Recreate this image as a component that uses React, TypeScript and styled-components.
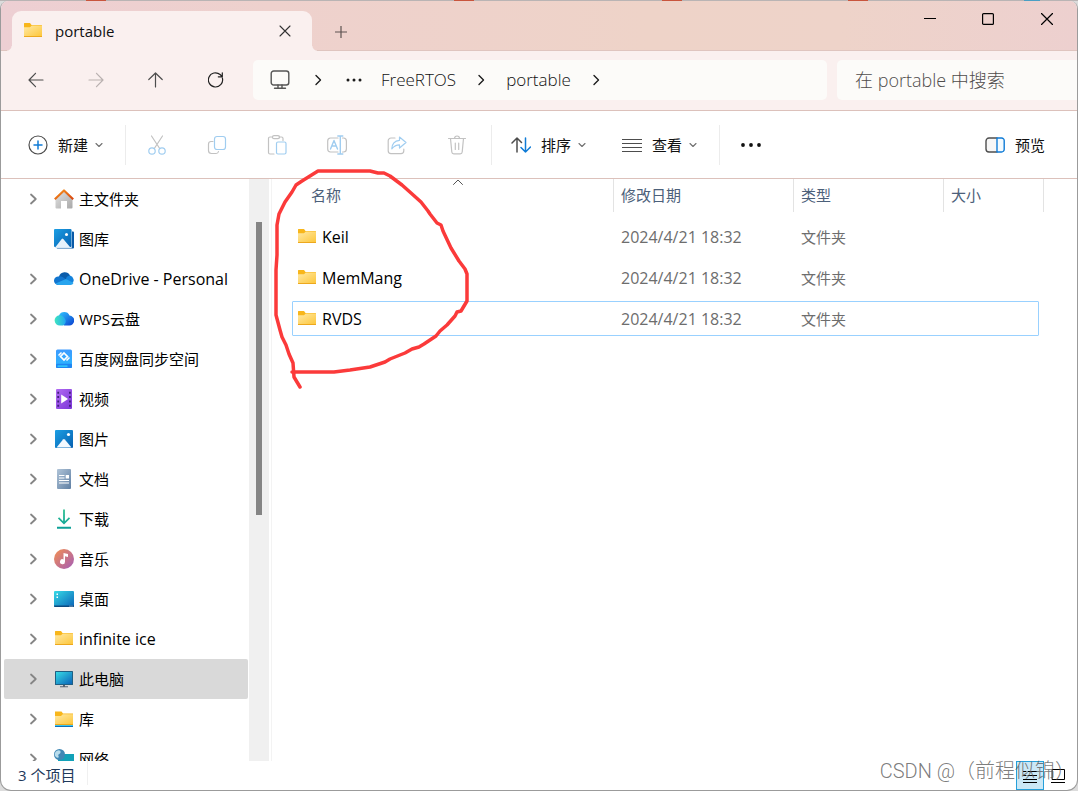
import React from "react";
import styled, { createGlobalStyle, css } from "styled-components";

const GlobalStyle = createGlobalStyle`
  *, *::before, *::after { box-sizing: border-box; }
  body {
    margin: 0;
    font-family: "Open Sans", "Noto Sans CJK SC", sans-serif;
    font-size: 15px;
    line-height: 20px;
    color: #111;
    background: #dcdcdc;
  }
  button, input, table { font: inherit; color: inherit; }
  button { border: 0; padding: 0; margin: 0; background: none; cursor: default; }
  ul { list-style: none; margin: 0; padding: 0; }
  svg { display: block; flex: none; }
`;

const LINE = "#dcc1bb";

/* ---------- window frame ---------- */

const Desktop = styled.div`
  height: 100vh;
  padding-top: 1px;
  background:
    linear-gradient(
      90deg,
      #b9b4b4 8%, #c8553d 8% 9.8%, #b9b4b4 9.8% 42.1%, #c8553d 42.1% 44%,
      #b9b4b4 44% 61.4%, #c8553d 61.4% 63.3%, #b9b4b4 63.3% 78.7%,
      #c8553d 78.7% 80.5%, #b9b4b4 80.5% 95%, #4a9fc4 95% 96.5%, #b9b4b4 96.5%
    ) top / 100% 1px no-repeat,
    #dcdcdc;
`;

const Window = styled.div`
  position: relative;
  display: flex;
  flex-direction: column;
  height: 100%;
  overflow: hidden;
  border: 1px solid #9b9b9b;
  border-top-width: 0;
  border-radius: 8px 8px 11px 11px;
  background: #fff;
`;

const TitleBar = styled.header`
  display: flex;
  flex: none;
  height: 50px;
  padding-left: 11px;
  background: linear-gradient(90deg, #edcfd3 0%, #eed1cd 25%, #eed3c8 60%, #eed3c9 78%, #edd0cf 100%);
  box-shadow: inset 0 -1px #dfc5bf;
`;

const Tab = styled.div`
  position: relative;
  display: flex;
  align-items: center;
  align-self: flex-end;
  width: 300px;
  height: 40px;
  padding: 0 17px 0 11px;
  border-radius: 9px 9px 0 0;
  background: #faf0ef;

  &::before, &::after {
    content: "";
    position: absolute;
    bottom: 0;
    width: 5px;
    height: 5px;
  }
  &::before {
    right: 100%;
    background: radial-gradient(circle at 0 0, transparent 4px, #faf0ef 5px);
  }
  &::after {
    left: 100%;
    background: radial-gradient(circle at 100% 0, transparent 4px, #faf0ef 5px);
  }
`;

const TabTitle = styled.span`
  flex: 1;
  margin-left: 12px;
  font-weight: 500;
`;

const PlainButton = styled.button<{ $width: number; $height: number }>`
  display: flex;
  align-items: center;
  justify-content: center;
  width: ${(p) => p.$width}px;
  height: ${(p) => p.$height}px;
`;

const NewTabSlot = styled.div`
  display: flex;
  align-items: flex-end;
  flex: 1;
  padding-left: 10px;
`;

/* ---------- navigation row ---------- */

const NavRow = styled.div`
  display: flex;
  flex: none;
  height: 60px;
  padding: 9px 0 0 5px;
  background: #faf0ef;
  border-bottom: 1px solid ${LINE};
`;

const Breadcrumb = styled.nav`
  display: flex;
  align-items: center;
  flex: 1;
  height: 40px;
  margin-left: 7px;
  padding-left: 17px;
  border-radius: 5px;
  background: #fcfbf9;
  color: #111;
`;

const Crumb = styled.a`
  margin: 0 19px;
  font-size: 17px;
  font-weight: 300;
  line-height: 24px;
  color: inherit;
  text-decoration: none;
`;

const Dots = styled.button`
  margin-left: 22px;
`;

const CrumbChevron = styled.span<{ $lead?: boolean }>`
  margin-left: ${(p) => (p.$lead ? 22 : 0)}px;
`;

const Search = styled.input`
  width: 240px;
  height: 40px;
  margin-left: 10px;
  padding: 0 18px;
  border: 0;
  border-radius: 5px 0 0 5px;
  outline: 0;
  background: #fcfbf9;
  font-size: 18px;
  font-weight: 300;

  &::placeholder { color: #4f4c4b; opacity: 1; }
`;

/* ---------- command bar ---------- */

const CommandBar = styled.div`
  display: flex;
  flex: none;
  align-items: center;
  height: 68px;
  padding: 0 14px 0 9px;
  border-bottom: 1px solid ${LINE};
`;

const Command = styled.button`
  display: flex;
  align-items: center;
  height: 40px;
  padding: 0 18px;

  & > span { margin-left: 10px; }
  & > span + svg { margin-left: 7px; }
`;

const Divider = styled.span`
  width: 1px;
  height: 40px;
  margin: 0 1px 0 4px;
  background: #ececec;
`;

const Spacer = styled.span`
  flex: 1;
`;

/* ---------- body ---------- */

const Body = styled.div`
  display: flex;
  flex: 1;
  min-height: 0;
`;

const Sidebar = styled.nav`
  width: 247px;
  padding-left: 3px;
  overflow: hidden;
`;

const TreeItem = styled.li<{ $selected?: boolean }>`
  display: flex;
  align-items: center;
  height: 40px;
  border-radius: 2px;
  color: #000;
  ${(p) => p.$selected && css`background: #d9d9d9;`}
`;

const Expander = styled.button`
  display: flex;
  justify-content: center;
  width: 20px;
  margin: 0 10px 0 20px;
`;

const TreeLink = styled.a<{ $latin?: boolean }>`
  display: flex;
  align-items: center;
  gap: 5px;
  font-size: ${(p) => (p.$latin ? 16 : 15)}px;
  color: inherit;
  text-decoration: none;
  white-space: nowrap;
`;

const ScrollTrack = styled.div`
  width: 20px;
  margin-left: 1px;
  padding: 43px 7px 0;
  background: #f0f0f0;
`;

const ScrollThumb = styled.div`
  height: 293px;
  background: #858585;
`;

const FilePane = styled.main`
  flex: 1;
  margin-left: 2px;
  padding-left: 20px;
  border-left: 1px solid #f3f3f3;
`;

const FileTable = styled.table`
  width: 752px;
  table-layout: fixed;
  border-collapse: collapse;
`;

const HeadCell = styled.th<{ $width: number; $indent?: boolean }>`
  position: relative;
  width: ${(p) => p.$width}px;
  height: 38px;
  padding: 0 0 0 ${(p) => (p.$indent ? 12 : 0)}px;
  vertical-align: top;
  font-weight: 400;
`;

const HeadButton = styled.button`
  display: block;
  width: 100%;
  height: 33px;
  padding: 0 7px 2px;
  border-right: 1px solid #e3e3e3;
  text-align: left;
  color: #4c607a;
`;

const SortMark = styled.span`
  position: absolute;
  top: 0;
  left: 161px;
`;

const FileRow = styled.tr<{ $focused?: boolean }>`
  position: relative;
  height: 41px;

  ${(p) =>
    p.$focused &&
    css`
      &::after {
        content: "";
        position: absolute;
        inset: 2px 5px 4px 0;
        border: 1px solid #99d1ff;
        border-radius: 1px;
      }
    `}
`;

const Cell = styled.td<{ $latin?: boolean }>`
  padding: 0 7px 2px;
  font-size: ${(p) => (p.$latin ? 16 : 15)}px;
  color: #6d6d6d;
`;

const NameCell = styled.td`
  padding: 0 5px 2px;
  font-size: 16px;
  color: #000;
`;

const FileName = styled.div`
  display: flex;
  align-items: center;
  gap: 5px;
`;

/* ---------- status bar ---------- */

const StatusBar = styled.footer`
  display: flex;
  flex: none;
  height: 29px;
  padding: 0 5px 0 17px;
`;

const StatusText = styled.span`
  height: 24px;
  padding: 4px 12px 0 0;
  border-right: 1px solid #f0f0f0;
  color: #1e395b;
`;

const ViewButton = styled.button<{ $active?: boolean }>`
  display: flex;
  align-items: center;
  justify-content: center;
  width: 28px;
  height: 29px;
  border: 1px solid ${(p) => (p.$active ? "#26a0da" : "transparent")};
  background: ${(p) => (p.$active ? "#cbe8f6" : "transparent")};
`;

const Watermark = styled.span`
  position: absolute;
  right: 2px;
  bottom: 6px;
  font-family: Roboto, "Noto Sans CJK SC", sans-serif;
  font-size: 20px;
  line-height: 26px;
  font-weight: 300;
  color: rgba(90, 90, 90, 0.8);
  white-space: nowrap;
  pointer-events: none;
`;

const Scribble = styled.svg`
  position: absolute;
  top: 159px;
  left: 269px;
  pointer-events: none;
`;

/* ---------- line icons ---------- */

type StrokeProps = {
  size?: number;
  color?: string;
  width?: number;
  children: React.ReactNode;
};

const Line = ({ size = 20, color = "#4d4d4d", width = 1.2, children }: StrokeProps) => (
  <svg
    width={size}
    height={size}
    viewBox={`0 0 ${size} ${size}`}
    fill="none"
    stroke={color}
    strokeWidth={width}
    strokeLinecap="round"
    strokeLinejoin="round"
    aria-hidden="true"
  >
    {children}
  </svg>
);

const ChevronDown = () => (
  <Line size={8} color="#6f6f6f" width={1.1}><path d="M1 2.500 4 5.500 7 2.500" /></Line>
);
const CrumbArrow = () => (
  <Line size={12} color="#1c1c1c" width={1.4}><path d="M4 1.500 8.500 6 4 10.500" /></Line>
);
const TreeArrow = () => (
  <Line size={12} color="#858585" width={1.8}><path d="M3 1.500 7.800 6 3 10.500" /></Line>
);

const PALE = "#c2c2c2";
const PALE_BLUE = "#a0cdf0";

const CutIcon = () => (
  <Line color={PALE}>
    <path d="M4.500 1 12.700 13.500M15.500 1 7.300 13.500" />
    <g stroke={PALE_BLUE}><circle cx="5" cy="16" r="3.200" /><circle cx="15" cy="16" r="3.200" /></g>
  </Line>
);
const CopyIcon = () => (
  <Line color={PALE}>
    <path d="M6 6.500H4a2.500 2.500 0 0 0-2.500 2.500v6.500A3 3 0 0 0 4.500 18.500h4.500a2.500 2.500 0 0 0 2.500-2" />
    <rect x="7.500" y="1.500" width="11" height="13" rx="2.500" stroke={PALE_BLUE} />
  </Line>
);
const PasteIcon = () => (
  <Line color={PALE}>
    <path d="M7 19H3a1.500 1.500 0 0 1-1.500-1.500v-14A1.500 1.500 0 0 1 3 2h2.500M12 2h2.500A1.500 1.500 0 0 1 16 3.500v2" />
    <rect x="5.500" y=".700" width="7" height="3" rx="1.500" />
    <rect x="9.500" y="7" width="9.500" height="12" rx="1.500" stroke={PALE_BLUE} />
  </Line>
);
const RenameIcon = () => (
  <Line color={PALE}>
    <path d="M11 3H3.500A3 3 0 0 0 .700 6v8a3 3 0 0 0 2.800 3H11M15.500 3h1A3 3 0 0 1 19.400 6v8a3 3 0 0 1-2.900 3h-1" />
    <g stroke={PALE_BLUE} strokeWidth="1.400"><path d="M3.500 14 7 5.500 10.500 14M4.800 11h4.400M13.300 1v18M10.800 1h5M10.800 19h5" /></g>
  </Line>
);
const ShareIcon = () => (
  <Line color={PALE}>
    <path d="M8 3H4A2.800 2.800 0 0 0 1.200 5.800v10A2.800 2.800 0 0 0 4 18.600h10a2.800 2.800 0 0 0 2.800-2.800V14" />
    <path d="M12.500 2 19 7.500 12.500 13v-3.200C9 9.800 7 11 4.800 13.800 5 9 7.500 5.800 12.500 5.300Z" stroke={PALE_BLUE} />
  </Line>
);
const DeleteIcon = () => (
  <Line color={PALE}>
    <path d="M1.500 3.500h17M7.500 3.500a2.500 2.500 0 0 1 5 0M3.500 3.500 4.800 17a2 2 0 0 0 2 1.800h6.400a2 2 0 0 0 2-1.800L16.500 3.500M8.300 8v6.500M11.700 8v6.500" />
  </Line>
);

/* ---------- coloured icons ---------- */

const Pic = ({ children }: { children: React.ReactNode }) => (
  <svg width="20" height="20" viewBox="0 0 20 20" aria-hidden="true">{children}</svg>
);

const GradientDefs = styled.svg`
  position: absolute;
`;

const Gradients = () => (
  <GradientDefs width="0" height="0" aria-hidden="true">
    <defs>
      <linearGradient id="folder" x1="0" y1="0" x2="1" y2="1"><stop offset="0" stopColor="#ffe9a6" /><stop offset="1" stopColor="#fdc73c" /></linearGradient>
      <linearGradient id="sky" x1="0" y1="0" x2="1" y2="1"><stop offset="0" stopColor="#1c9fe4" /><stop offset="1" stopColor="#0660b0" /></linearGradient>
      <linearGradient id="screen" x1="0" y1="0" x2="1" y2="1"><stop offset="0" stopColor="#36dbe6" /><stop offset="1" stopColor="#0b63b8" /></linearGradient>
      <linearGradient id="wall" x1="0" y1="0" x2="1" y2="1"><stop offset="0" stopColor="#e3e3e3" /><stop offset="1" stopColor="#a8a8a8" /></linearGradient>
      <linearGradient id="roof" x1="0" y1="0" x2="1" y2="1"><stop offset="0" stopColor="#f7941d" /><stop offset="1" stopColor="#d8440f" /></linearGradient>
      <linearGradient id="wps" x1="0" y1="0" x2="1" y2="0"><stop offset="0" stopColor="#3fe6c0" /><stop offset="1" stopColor="#22a6f2" /></linearGradient>
      <linearGradient id="wpsBack" x1="0" y1="0" x2="1" y2="1"><stop offset="0" stopColor="#2fc4ff" /><stop offset="1" stopColor="#0a3fd0" /></linearGradient>
      <linearGradient id="baidu" x1="0" y1="0" x2="0" y2="1"><stop offset="0" stopColor="#3d9bff" /><stop offset="1" stopColor="#2ab8ff" /></linearGradient>
      <linearGradient id="film" x1="0" y1="0" x2="1" y2="1"><stop offset="0" stopColor="#b26bf2" /><stop offset="1" stopColor="#7b35d8" /></linearGradient>
      <linearGradient id="paper" x1="0" y1="0" x2="1" y2="1"><stop offset="0" stopColor="#b0c4d8" /><stop offset="1" stopColor="#5f7fa3" /></linearGradient>
      <linearGradient id="down" x1="0" y1="0" x2="0" y2="1"><stop offset="0" stopColor="#2fc193" /><stop offset="1" stopColor="#0c9f98" /></linearGradient>
      <linearGradient id="disc" x1="0" y1="0" x2="1" y2="1"><stop offset="0" stopColor="#f49050" /><stop offset="1" stopColor="#a35cb8" /></linearGradient>
    </defs>
  </GradientDefs>
);

const FolderIcon = () => (
  <Pic>
    <path d="M1 2.500A.500.500 0 0 1 1.500 2H7l1.500 2H18.500a.500.500 0 0 1 .500.500V7H1Z" fill="#f8b61b" />
    <path d="M1 6.200h6L8.800 4.500H19V15H1Z" fill="url(#folder)" />
    <path d="M1 15h18v1H1Z" fill="#eda81d" />
  </Pic>
);
const HomeIcon = () => (
  <Pic>
    <path d="M1.500 9.500 10 2l8.500 7.500V18.500a1 1 0 0 1-1 1H13V12H7v7.500H2.500a1 1 0 0 1-1-1Z" fill="url(#wall)" />
    <path d="m.800 10.200 9.200-8.700 9.200 8.700" fill="none" stroke="url(#roof)" strokeWidth="2.200" strokeLinejoin="round" />
  </Pic>
);
const GalleryIcon = () => (
  <Pic>
    <path d="M2.500 18h15V2.500H19a1 1 0 0 1 1 1v15a1 1 0 0 1-1 1H3.500a1 1 0 0 1-1-1Z" fill="#0a5aa8" />
    <path d="M17.500 1v17.500H1" fill="none" stroke="#d7e8f6" strokeWidth="1" />
    <rect width="17.500" height="18" rx="1" fill="url(#sky)" />
    <path d="m1.500 18 6.200-8a1 1 0 0 1 1.600 0l6.700 8Z" fill="#e6f2fc" />
    <circle cx="12.500" cy="5.500" r="1.500" fill="#fff" />
  </Pic>
);
const OneDriveIcon = () => (
  <Pic>
    <path d="M5 7.500a6 6 0 0 1 11-1l-3 5.500H5Z" fill="#0a5cab" />
    <path d="M4 16A4.200 4.200 0 0 1 4.500 7.500c2.500-.600 4 .500 7.500 3l-5 5.500Z" fill="#1175cf" />
    <path d="M12 9A5.500 5.500 0 0 1 16 6.500a4.600 4.600 0 0 1 2 8l-5-2Z" fill="#1382dc" />
    <path d="M1.500 14.500 12 10l7.500 4a3.200 3.200 0 0 1-3 2H4.500A4 4 0 0 1 1.500 14.500Z" fill="#28a4ee" />
  </Pic>
);
const WpsIcon = () => (
  <Pic>
    <path d="M5 6.500a5.700 5.700 0 0 1 10.500 0 5 5 0 0 1-.500 10H10Z" fill="url(#wpsBack)" />
    <path d="M5.500 6.200c3 .200 4.500 1.500 6 4.500.800 2.500-.500 5.800-3.500 5.800H6a5.100 5.100 0 0 1-.500-10.300Z" fill="url(#wps)" />
  </Pic>
);
const BaiduIcon = () => (
  <Pic>
    <rect x="2" y=".500" width="16" height="18.500" rx="1.500" fill="url(#baidu)" />
    <rect x="2" y="14.800" width="16" height="4.200" rx="1" fill="#1f86f2" />
    <rect x="3.500" y="16.500" width="10" height="1.200" fill="#37dcff" />
    <path d="M10 4 13.500 7.500 10 11 6.500 7.500Z" fill="none" stroke="#fff" strokeWidth="1.700" />
    <path d="m4.500 6.500 3-3M12.500 11.500l3-3" stroke="#fff" strokeWidth="1.500" />
  </Pic>
);
const VideoIcon = () => (
  <Pic>
    <rect x="2" width="16" height="20" rx="1" fill="url(#film)" />
    <path d="M4.200 2.800v15M15.900 2.800v15" stroke="#41207a" strokeWidth="1.800" strokeDasharray="2 2.300" />
    <path d="M7.200 5.500v9L14 10Z" fill="#fff" />
  </Pic>
);
const PicturesIcon = () => (
  <Pic>
    <rect x="1" y="1" width="18" height="18" rx="1" fill="url(#sky)" />
    <path d="m2.500 18.500 6.500-8a1.200 1.200 0 0 1 1.800 0l6.700 8Z" fill="#f3f9ff" />
    <circle cx="14.500" cy="5.500" r="1.600" fill="#fff" />
  </Pic>
);
const DocsIcon = () => (
  <Pic>
    <rect x="3" width="14" height="20" rx="1" fill="url(#paper)" />
    <path d="M5 6.500h5.500M5 9h5.500M5 11.500h10M5 14h10" stroke="#fff" strokeWidth="1.200" />
    <rect x="11.700" y="6" width="3.300" height="3.500" fill="#fff" />
  </Pic>
);
const DownloadIcon = () => (
  <Pic>
    <path d="M9.100.500h1.800v11.700l4-4 1.200 1.300-6.100 6-6.100-6 1.200-1.300 4 4ZM3 17.800h14v2H3Z" fill="url(#down)" />
  </Pic>
);
const MusicIcon = () => (
  <Pic>
    <circle cx="10" cy="10" r="10" fill="url(#disc)" />
    <path d="M9.500 4 14 5v3l-3-.700V12.700a2.500 2.500 0 1 1-1.500-2.300Z" fill="#fff" />
  </Pic>
);
const DesktopIcon = () => (
  <Pic>
    <rect y="2" width="20" height="16" rx="1" fill="url(#screen)" />
    <path d="M0 16.500h20v.500a1 1 0 0 1-1 1H1a1 1 0 0 1-1-1Z" fill="#0c4a80" />
    <path d="M2.500 4.500h1.500V6H2.500ZM2.500 7.500h1.500V9H2.500ZM15.500 16.700h1v.800h-1ZM17.500 16.700h1v.800h-1Z" fill="#fff" />
  </Pic>
);
const PcIcon = () => (
  <Pic>
    <rect x="1" y="2" width="18" height="14" rx=".500" fill="#1f5f83" />
    <rect x="2" y="3" width="16" height="12" fill="url(#screen)" />
    <path d="M9 16h2v1.500h-2ZM6 17.200h8v1H6Z" fill="#596473" />
  </Pic>
);
const LibraryIcon = () => (
  <Pic>
    <path d="M1 2.500h6.500l1.500 2H19V8H1Z" fill="#f8b61b" />
    <path d="M1 7h6l1.800-1.700H19V15H1Z" fill="url(#folder)" />
    <path d="M1 15h18v1H1Z" fill="#eda81d" />
    <path d="M1 16h18v1H1Z" fill="#3ac5ee" />
    <path d="M1 17h18v1H1Z" fill="#0f6fb8" />
  </Pic>
);
const NetworkIcon = () => (
  <Pic>
    <rect x="4" y="5" width="16" height="12" fill="#12a1b8" />
    <circle cx="5.500" cy="5.500" r="5.500" fill="#3f87b5" />
    <path d="M2.500 2C5 .500 7 1.500 6.500 3.500S3.500 5 4.500 7 3 9.500 1.500 7.500 1 3 2.500 2Z" fill="#b9dcec" />
  </Pic>
);

/* ---------- data ---------- */

type Place = {
  label: string;
  icon: () => React.ReactElement;
  leaf?: boolean;
  latin?: boolean;
  selected?: boolean;
};

const places: Place[] = [
  { label: "主文件夹", icon: HomeIcon },
  { label: "图库", icon: GalleryIcon, leaf: true },
  { label: "OneDrive - Personal", icon: OneDriveIcon, latin: true },
  { label: "WPS云盘", icon: WpsIcon },
  { label: "百度网盘同步空间", icon: BaiduIcon },
  { label: "视频", icon: VideoIcon },
  { label: "图片", icon: PicturesIcon },
  { label: "文档", icon: DocsIcon },
  { label: "下载", icon: DownloadIcon },
  { label: "音乐", icon: MusicIcon },
  { label: "桌面", icon: DesktopIcon },
  { label: "infinite ice", icon: FolderIcon, latin: true },
  { label: "此电脑", icon: PcIcon, selected: true },
  { label: "库", icon: LibraryIcon },
  { label: "网络", icon: NetworkIcon },
];

const files = [
  { name: "Keil", date: "2024/4/21 18:32", type: "文件夹" },
  { name: "MemMang", date: "2024/4/21 18:32", type: "文件夹" },
  { name: "RVDS", date: "2024/4/21 18:32", type: "文件夹", focused: true },
];

const editCommands = [
  { label: "剪切", icon: CutIcon },
  { label: "复制", icon: CopyIcon },
  { label: "粘贴", icon: PasteIcon },
  { label: "重命名", icon: RenameIcon },
  { label: "共享", icon: ShareIcon },
  { label: "删除", icon: DeleteIcon },
];

export default function App() {
  return (
    <Desktop>
      <GlobalStyle />
      <Gradients />
      <Window>
        <TitleBar>
          <Tab>
            <FolderIcon />
            <TabTitle>portable</TabTitle>
            <PlainButton $width={20} $height={20} aria-label="关闭标签页">
              <Line size={12} color="#333" width={1.1}><path d="m1 1 10 10M11 1 1 11" /></Line>
            </PlainButton>
          </Tab>
          <NewTabSlot>
            <PlainButton $width={38} $height={38} aria-label="新建标签页">
              <Line size={12} color="#5d5250"><path d="M6 0v12M0 6h12" /></Line>
            </PlainButton>
          </NewTabSlot>
          <PlainButton $width={58} $height={36} aria-label="最小化">
            <Line size={12} color="#000"><path d="M0 5.500h12" /></Line>
          </PlainButton>
          <PlainButton $width={58} $height={36} aria-label="最大化">
            <Line size={12} color="#000"><rect x=".600" y=".600" width="10.800" height="10.800" rx="1" /></Line>
          </PlainButton>
          <PlainButton $width={60} $height={36} aria-label="关闭">
            <Line size={12} color="#000"><path d="m.500.500 11 11M11.500.500l-11 11" /></Line>
          </PlainButton>
        </TitleBar>

        <NavRow>
          <PlainButton $width={60} $height={40} aria-label="后退">
            <Line size={16}><path d="M15 8H1M7.500 1.300 1 8l6.500 6.700" /></Line>
          </PlainButton>
          <PlainButton $width={60} $height={40} aria-label="前进" disabled>
            <Line size={16} color="#b9b1b0"><path d="M1 8h14M8.500 1.300 15 8l-6.500 6.700" /></Line>
          </PlainButton>
          <PlainButton $width={60} $height={40} aria-label="上移">
            <Line size={16}><path d="M7.500 15V1M.800 7.500 7.500 1l6.700 6.500" /></Line>
          </PlainButton>
          <PlainButton $width={60} $height={40} aria-label="刷新">
            <Line size={16} color="#222"><path d="M14.400 6.200A7.100 7.100 0 1 1 12.100 2.500L14.100 4.500M14.300.800v4h-4" /></Line>
          </PlainButton>
          <Breadcrumb aria-label="地址">
            <Line color="#555" width={1.400}>
              <rect x="1.200" y="1" width="17.600" height="14" rx="2.500" />
              <path d="M8 15v3M12 15v3M4.500 18.300h11" />
            </Line>
            <CrumbChevron $lead><CrumbArrow /></CrumbChevron>
            <Dots aria-label="更多路径">
              <svg width="16" height="4" viewBox="0 0 16 4" fill="#1c1c1c"><circle cx="2" cy="2" r="1.500" /><circle cx="8" cy="2" r="1.500" /><circle cx="14" cy="2" r="1.500" /></svg>
            </Dots>
            <Crumb href="#freertos">FreeRTOS</Crumb>
            <CrumbChevron><CrumbArrow /></CrumbChevron>
            <Crumb href="#portable">portable</Crumb>
            <CrumbChevron><CrumbArrow /></CrumbChevron>
          </Breadcrumb>
          <Search type="search" placeholder="在 portable 中搜索" aria-label="搜索" />
        </NavRow>

        <CommandBar>
          <Command>
            <Line><circle cx="10" cy="10" r="9" /><path d="M10 6v8M6 10h8" stroke="#0f7bd6" strokeWidth="1.500" /></Line>
            <span>新建</span>
            <ChevronDown />
          </Command>
          <Divider />
          {editCommands.map(({ label, icon: Icon }) => (
            <PlainButton key={label} $width={60} $height={40} aria-label={label} disabled><Icon /></PlainButton>
          ))}
          <Divider />
          <Command>
            <Line width={1.500}>
              <path d="M6 17V3M1 8l5-5 4.500 4.500" />
              <path d="M14.500 3v14M10 12.500l4.500 4.500 5-5" stroke="#0f7bd6" />
            </Line>
            <span>排序</span>
            <ChevronDown />
          </Command>
          <Command>
            <Line width={1}><path d="M0 4.500h20M0 8.500h20M0 12.500h20M0 16.500h20" /></Line>
            <span>查看</span>
            <ChevronDown />
          </Command>
          <Divider />
          <PlainButton $width={60} $height={40} aria-label="更多">
            <svg width="22" height="4" viewBox="0 0 22 4" fill="#111"><circle cx="3" cy="2" r="1.900" /><circle cx="11" cy="2" r="1.900" /><circle cx="19" cy="2" r="1.900" /></svg>
          </PlainButton>
          <Spacer />
          <Command>
            <Line width={1.400}>
              <path d="M12 3H4A3 3 0 0 0 1 6v8a3 3 0 0 0 3 3h8" fill="#f7f7f7" />
              <path d="M12 3h4.500A2.700 2.700 0 0 1 19.200 6v8a2.700 2.700 0 0 1-2.700 3H12Z" fill="#f4fbff" stroke="#0f7bd6" />
            </Line>
            <span>预览</span>
          </Command>
        </CommandBar>

        <Body>
          <Sidebar aria-label="导航窗格">
            <ul>
              {places.map(({ label, icon: Icon, leaf, latin, selected }) => (
                <TreeItem key={label} $selected={selected}>
                  <Expander aria-label={`展开 ${label}`} disabled={leaf}>{!leaf && <TreeArrow />}</Expander>
                  <TreeLink href="#place" $latin={latin}><Icon />{label}</TreeLink>
                </TreeItem>
              ))}
            </ul>
          </Sidebar>
          <ScrollTrack><ScrollThumb /></ScrollTrack>
          <FilePane>
            <FileTable>
              <thead>
                <tr>
                  <HeadCell $width={322} $indent>
                    <HeadButton>名称</HeadButton>
                    <SortMark><Line size={10} color="#555" width={1}><path d="M.500 5.500 5 1l4.500 4.500" /></Line></SortMark>
                  </HeadCell>
                  <HeadCell $width={180}><HeadButton>修改日期</HeadButton></HeadCell>
                  <HeadCell $width={150}><HeadButton>类型</HeadButton></HeadCell>
                  <HeadCell $width={100}><HeadButton>大小</HeadButton></HeadCell>
                </tr>
              </thead>
              <tbody>
                {files.map((file) => (
                  <FileRow key={file.name} $focused={file.focused}>
                    <NameCell><FileName><FolderIcon />{file.name}</FileName></NameCell>
                    <Cell $latin>{file.date}</Cell>
                    <Cell>{file.type}</Cell>
                    <Cell />
                  </FileRow>
                ))}
              </tbody>
            </FileTable>
          </FilePane>
        </Body>

        <StatusBar>
          <StatusText>3 个项目</StatusText>
          <Spacer />
          <ViewButton $active aria-label="详细信息">
            <Line size={14} color="#000" width={1}><path d="M0 2.500h3M5 2.500h9M0 6.500h3M5 6.500h9M0 10.500h14M0 13.500h14" /></Line>
          </ViewButton>
          <ViewButton aria-label="大缩略图">
            <Line size={14} color="#000" width={1}><rect x="1.500" y=".500" width="12" height="10" /><path d="M0 13.500h14" /></Line>
          </ViewButton>
        </StatusBar>

        <Watermark>CSDN @（前程似锦）</Watermark>
        <Scribble width="204" height="234" viewBox="270 160 204 234" fill="none" stroke="#fb3a3a" strokeWidth="3.500" strokeLinejoin="round" strokeLinecap="round" aria-hidden="true">
          <path d="M292 372 334 372 350 370 370 367 385 362 390 359 405 353 412 349 419 347 424 344 436 336 440 331 447 325 455 316 457 312 461 311 467 301 467 274 465 269 459 261 451 248 443 231 441 225 437 223 430 214 428 211 421 202 411 193 402 185 390 176 384 173 378 173 370 171 318 171 302 181 296 185 292 192 285 202 279 214 277 225 277 255 276 270 276 315 280 330 282 337 286 345 289 354 293 363 294 377 300 387" />
        </Scribble>
      </Window>
    </Desktop>
  );
}
